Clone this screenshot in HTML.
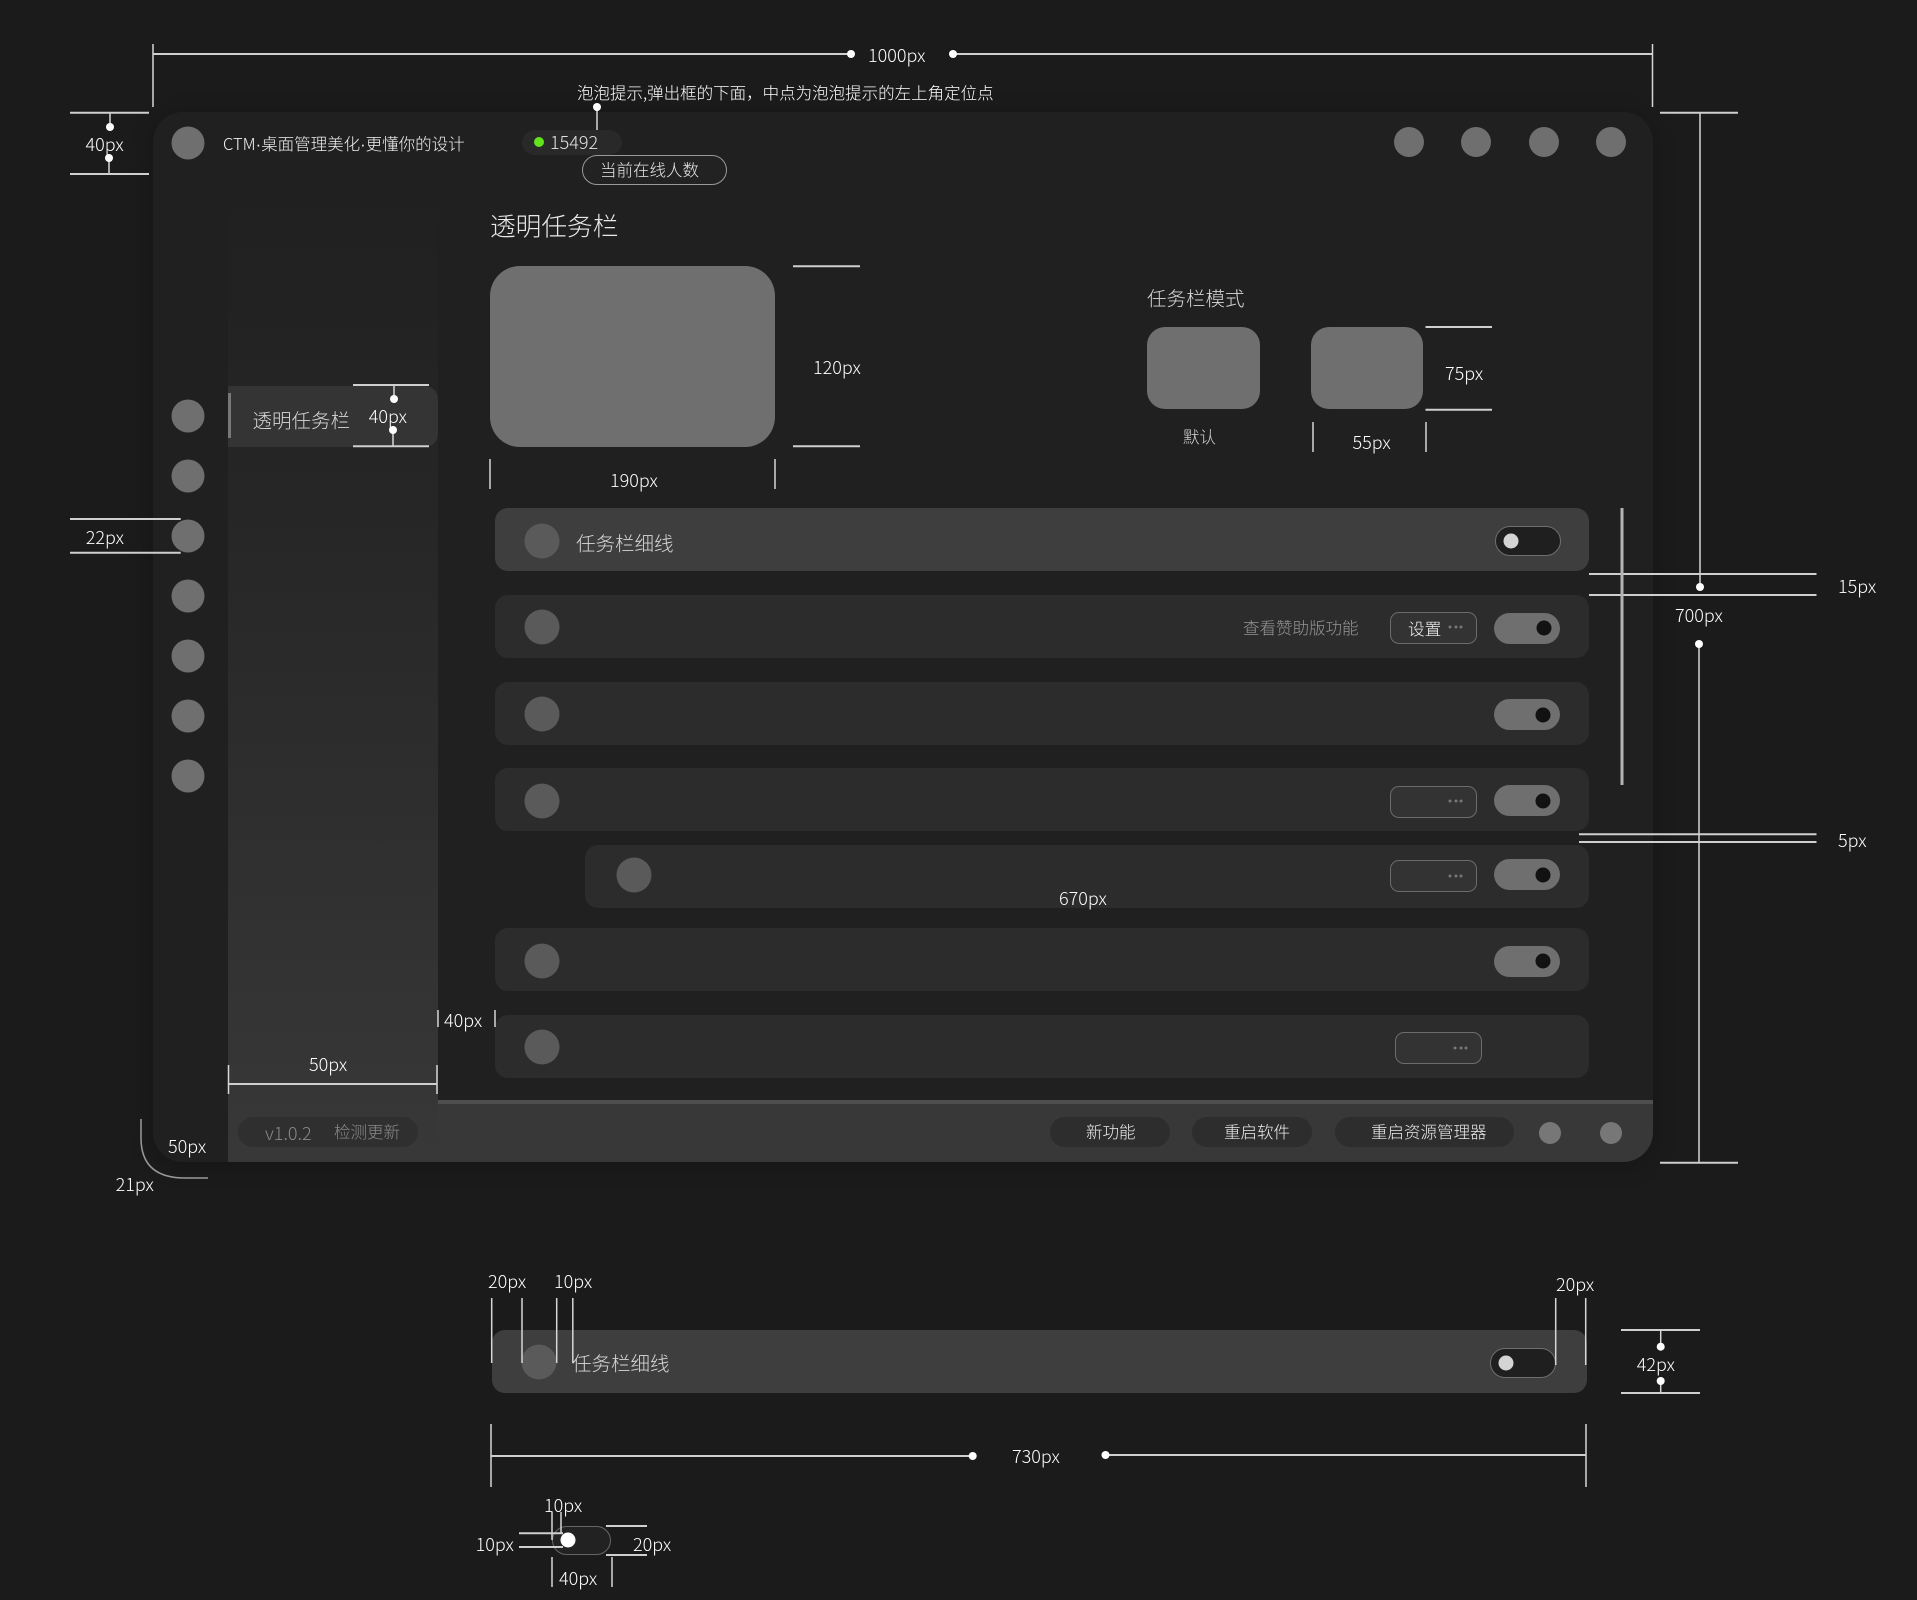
<!DOCTYPE html>
<html lang="zh-CN">
<head>
<meta charset="utf-8">
<title>CTM</title>
<style>
html,body{margin:0;padding:0;background:#1b1b1b;}
body{position:relative;width:1917px;height:1600px;overflow:hidden;font-family:"Noto Sans CJK SC","Liberation Sans",sans-serif;font-weight:300;}
div,span{position:absolute;box-sizing:border-box;}
i{font-style:normal;font-family:"Liberation Sans",sans-serif;}
#win{left:153px;top:112px;width:1500px;height:1050px;background:#202020;border-radius:30px;box-shadow:0 4px 24px rgba(0,0,0,.22);overflow:hidden;}
#side{left:228px;top:180px;width:210px;height:982px;background:linear-gradient(#202020,#262626 33%,#333 81%,#383838);}
#rail{left:153px;top:1000px;width:75px;height:162px;background:#202020;border-radius:0 0 0 30px;}
#bar{left:438px;top:1100px;width:1215px;height:62px;background:#383838;border-top:4px solid #4e4e4e;border-radius:0 0 30px 0;}
.c{border-radius:50%;transform:translate(-50%,-50%);}
.gc{width:33px;height:33px;background:#6f6f6f;}
.top{width:30px;height:30px;background:#6f6f6f;}
.rc{width:35px;height:35px;background:#5a5a5a;}
.row{height:63px;left:495px;width:1094px;background:#2c2c2c;border-radius:13px;}
.row.a{background:#3e3e3e;}
.off{width:66px;height:30px;background:#1f1f1f;border:1.5px solid #6f6f6f;border-radius:15px;}
.on{width:66px;height:31px;background:#6f6f6f;border-radius:16px;}
.kw{width:15px;height:15px;background:#d4d4d4;}
.kb{width:15px;height:15px;background:#121212;}
.btn{width:87px;height:32px;background:#333;border:1.5px solid #6c6c6c;border-radius:9px;}
.dot3{width:3px;height:3px;background:#777;}
.box{background:#6f6f6f;}
.pill{height:30px;background:#2d2d2d;border-radius:15px;}
.t{white-space:nowrap;transform:translateY(-50%);line-height:1.2;color:#eee;font-size:18px;}
.a1{color:#fff;}
.grey{color:#8a8a8a;}
#ann{left:0;top:0;}
</style>
</head>
<body>
<div id="win"></div>
<div id="side"></div>
<div id="rail"></div>
<div id="bar"></div>

<!-- header -->
<div class="c top" style="left:187.5px;top:143px;width:33px;height:33px;background:#6f6f6f"></div>
<div class="c top" style="left:1409px;top:142px"></div>
<div class="c top" style="left:1476px;top:142px"></div>
<div class="c top" style="left:1543.5px;top:142px"></div>
<div class="c top" style="left:1610.5px;top:142px"></div>
<div style="left:522px;top:130px;width:100px;height:25px;background:#292929;border-radius:13px"></div>
<div class="c" style="left:538.5px;top:142px;width:10px;height:10px;background:#62e31c"></div>
<div style="left:582px;top:155px;width:145px;height:30px;background:#222;border:1.5px solid #999;border-radius:15px"></div>

<!-- rail -->
<div class="c gc" style="left:187.5px;top:415.7px"></div>
<div class="c gc" style="left:187.5px;top:475.7px"></div>
<div class="c gc" style="left:187.5px;top:535.7px"></div>
<div class="c gc" style="left:187.5px;top:595.7px"></div>
<div class="c gc" style="left:187.5px;top:655.7px"></div>
<div class="c gc" style="left:187.5px;top:715.7px"></div>
<div class="c gc" style="left:187.5px;top:775.7px"></div>

<!-- sidebar item -->
<div style="left:228px;top:386px;width:210px;height:61px;background:#343434;border-radius:0 13px 13px 0"></div>
<div style="left:228px;top:393px;width:3px;height:45px;background:#787878"></div>

<!-- previews -->
<div class="box" style="left:490px;top:266px;width:285px;height:180.5px;border-radius:30px"></div>
<div class="box" style="left:1147px;top:327px;width:113px;height:82px;border-radius:18px"></div>
<div class="box" style="left:1311px;top:327px;width:112px;height:82px;border-radius:18px"></div>

<!-- rows -->
<div class="row a" style="top:508px"></div>
<div class="row" style="top:595px"></div>
<div class="row" style="top:682px"></div>
<div class="row" style="top:768px"></div>
<div class="row" style="top:844.5px;left:585px;width:1004px"></div>
<div class="row" style="top:928px"></div>
<div class="row" style="top:1015px"></div>

<div class="c rc" style="left:542px;top:540.5px"></div>
<div class="c rc" style="left:542px;top:627px"></div>
<div class="c rc" style="left:542px;top:714px"></div>
<div class="c rc" style="left:542px;top:800.5px"></div>
<div class="c rc" style="left:633.5px;top:875px"></div>
<div class="c rc" style="left:542px;top:961px"></div>
<div class="c rc" style="left:542px;top:1047px"></div>

<!-- toggles -->
<div class="off" style="left:1494.5px;top:526px"></div>
<div class="c kw" style="left:1511px;top:541px"></div>
<div class="on" style="left:1494px;top:613px"></div>
<div class="c kb" style="left:1544px;top:628px"></div>
<div class="on" style="left:1493.5px;top:699px"></div>
<div class="c kb" style="left:1543px;top:714.5px"></div>
<div class="on" style="left:1493.5px;top:785px"></div>
<div class="c kb" style="left:1543px;top:800.5px"></div>
<div class="on" style="left:1493.5px;top:859px"></div>
<div class="c kb" style="left:1543px;top:874.5px"></div>
<div class="on" style="left:1493.5px;top:946px"></div>
<div class="c kb" style="left:1543px;top:961px"></div>

<!-- buttons -->
<div class="btn" style="left:1390px;top:611.5px"></div>
<div class="btn" style="left:1390px;top:785.5px"></div>
<div class="btn" style="left:1390px;top:859.5px"></div>
<div class="btn" style="left:1395px;top:1032px"></div>
<div class="c dot3" style="left:1450px;top:627px"></div><div class="c dot3" style="left:1455.5px;top:627px"></div><div class="c dot3" style="left:1461px;top:627px"></div>
<div class="c dot3" style="left:1450px;top:801px"></div><div class="c dot3" style="left:1455.5px;top:801px"></div><div class="c dot3" style="left:1461px;top:801px"></div>
<div class="c dot3" style="left:1450px;top:875.5px"></div><div class="c dot3" style="left:1455.5px;top:875.5px"></div><div class="c dot3" style="left:1461px;top:875.5px"></div>
<div class="c dot3" style="left:1455px;top:1048px"></div><div class="c dot3" style="left:1460.5px;top:1048px"></div><div class="c dot3" style="left:1466px;top:1048px"></div>

<!-- bottom bar -->
<div class="pill" style="left:238px;top:1117px;width:180px;background:#2f2f2f"></div>
<div class="pill" style="left:1050px;top:1117px;width:120px"></div>
<div class="pill" style="left:1192px;top:1117px;width:120px"></div>
<div class="pill" style="left:1335px;top:1117px;width:179px"></div>
<div class="c" style="left:1549.5px;top:1133px;width:22px;height:22px;background:#777"></div>
<div class="c" style="left:1611px;top:1133px;width:22px;height:22px;background:#777"></div>

<!-- lower example -->
<div class="row a" style="left:492px;top:1330px;width:1095px"></div>
<div class="c rc" style="left:539px;top:1362px"></div>
<div class="off" style="left:1489.5px;top:1348px"></div>
<div class="c kw" style="left:1506px;top:1363px"></div>
<div style="left:552px;top:1526px;width:59px;height:29px;background:#222;border:1.5px solid #666;border-radius:15px"></div>

<svg id="ann" style="position:absolute" width="1917" height="1600" viewBox="0 0 1917 1600">
<g fill="none" stroke="#d6d6d6" stroke-width="1.5">
<path d="M153 44V107M1652.5 44V107"/>
<path d="M597 107V130"/>
<path d="M110 113V127M109 158V174"/>
<path d="M394 385V399M393 430V446"/>
<path d="M490 459V489M775 459V489"/>
<path d="M1313 422V452M1426 422V452"/>
<path d="M1700 113V587M1699 644V1162"/>
<path d="M438 1010V1027M495 1010V1027"/>
<path d="M228.5 1065V1094M437 1065V1094"/>
<path d="M491.7 1298V1363M522 1298V1363M556.7 1298V1363M572.8 1298V1363"/>
<path d="M1555.7 1298V1365M1585.7 1298V1365"/>
<path d="M1660.7 1330V1347M1660.7 1381V1393"/>
<path d="M491 1424V1487M1586 1424V1487"/>
<path d="M552 1512V1540M561 1512V1533"/>
<path d="M552 1557V1587M612 1557V1587"/>
</g>
<g fill="none" stroke="#cfcfcf" stroke-width="2">
<path d="M153 54H851M953 54H1652"/>
<path d="M70 112.7H149M70 174H149"/>
<path d="M353 385H429M353 446.3H429"/>
<path d="M793 266.3H860M793 446.3H860"/>
<path d="M1425.5 327H1492M1425.5 409.7H1492"/>
<path d="M1660 112.7H1738M1660 1162.7H1738"/>
<path d="M1589 574H1816.5M1589 595H1816.5"/>
<path d="M1579 834.3H1816.5M1579 842H1816.5"/>
<path d="M70 519H180.7M70 552.7H180.7"/>
<path d="M229 1084H437"/>
<path d="M1621 1330H1700M1621 1393H1700"/>
<path d="M491 1456H972.7M1105.5 1455H1586"/>
<path d="M519 1533.3H563M519 1547H563"/>
<path d="M606 1526H647M606 1555H647"/>
</g>
<path d="M1622 508V785" fill="none" stroke="#b4b4b4" stroke-width="3"/>
<path d="M141 1119V1138Q141 1178 185 1178H208" fill="none" stroke="#9a9a9a" stroke-width="1.5"/>
<g fill="#fff">
<circle cx="851" cy="54" r="4"/><circle cx="953" cy="54" r="4"/>
<circle cx="597" cy="107" r="4"/>
<circle cx="110" cy="127" r="4"/><circle cx="109" cy="158" r="4"/>
<circle cx="394" cy="399" r="4"/><circle cx="393" cy="430" r="4"/>
<circle cx="1700" cy="587" r="4"/><circle cx="1699" cy="644" r="4"/>
<circle cx="1660.7" cy="1346.7" r="4"/><circle cx="1660.7" cy="1381" r="4"/>
<circle cx="972.7" cy="1456" r="4"/><circle cx="1105.5" cy="1455" r="4"/>
<circle cx="568" cy="1540" r="7.5"/>
</g>
</svg>

<!-- UI text -->
<div class="t" style="left:223px;top:145px;font-size:16.5px;color:#f0f0f0">CTM<i>·</i>桌面管理美化<i>·</i>更懂你的设计</div>
<div class="t" style="left:550px;top:143px;font-size:18px;color:#e4e4e4">15492</div>
<div class="t" style="left:600px;top:170px;font-size:16.5px;color:#e8e8e8">当前在线人数</div>
<div class="t" style="left:490px;top:226px;font-size:25.7px;color:#e8e8e8">透明任务栏</div>
<div class="t" style="left:252.5px;top:419px;font-size:19.5px;color:#d8d8d8">透明任务栏</div>
<div class="t" style="left:1147px;top:297px;font-size:19.5px;color:#d8d8d8">任务栏模式</div>
<div class="t" style="left:1183px;top:436.5px;font-size:16.5px;color:#d4d4d4">默认</div>
<div class="t" style="left:576px;top:542px;font-size:19.5px;color:#d8d8d8">任务栏细线</div>
<div class="t" style="left:1243px;top:628px;font-size:16.5px;color:#969696">查看赞助版功能</div>
<div class="t" style="left:1408px;top:628px;font-size:16.7px;color:#f4f4f4">设置</div>
<div class="t grey" style="left:265px;top:1133.5px;font-size:18px">v1.0.2</div>
<div class="t grey" style="left:334px;top:1132px;font-size:16.5px">检测更新</div>
<div class="t" style="left:1086px;top:1132px;font-size:16.5px;color:#ececec">新功能</div>
<div class="t" style="left:1224px;top:1132px;font-size:16.5px;color:#ececec">重启软件</div>
<div class="t" style="left:1371px;top:1132px;font-size:16.5px;color:#ececec">重启资源管理器</div>
<div class="t" style="left:572px;top:1362px;font-size:19.5px;color:#d8d8d8">任务栏细线</div>

<!-- annotation text -->
<div class="t a1" style="left:868px;top:56px">1000px</div>
<div class="t a1" style="left:577px;top:93px;font-size:16.5px">泡泡提示,弹出框的下面，中点为泡泡提示的左上角定位点</div>
<div class="t a1" style="left:85.5px;top:145px">40px</div>
<div class="t a1" style="left:368.7px;top:417px">40px</div>
<div class="t a1" style="left:813px;top:368px">120px</div>
<div class="t a1" style="left:610px;top:481px">190px</div>
<div class="t a1" style="left:1445px;top:374px">75px</div>
<div class="t a1" style="left:1352.5px;top:443px">55px</div>
<div class="t a1" style="left:1675px;top:616px">700px</div>
<div class="t a1" style="left:1838px;top:587px">15px</div>
<div class="t a1" style="left:1838px;top:841px">5px</div>
<div class="t a1" style="left:1059px;top:898.5px">670px</div>
<div class="t a1" style="left:85.7px;top:538px">22px</div>
<div class="t a1" style="left:444px;top:1021px">40px</div>
<div class="t a1" style="left:309px;top:1065px">50px</div>
<div class="t a1" style="left:168px;top:1147px">50px</div>
<div class="t a1" style="left:115.6px;top:1185px">21px</div>
<div class="t a1" style="left:488px;top:1282px">20px</div>
<div class="t a1" style="left:554px;top:1282px">10px</div>
<div class="t a1" style="left:1556px;top:1285px">20px</div>
<div class="t a1" style="left:1636.7px;top:1364.7px">42px</div>
<div class="t a1" style="left:1012px;top:1457px">730px</div>
<div class="t a1" style="left:544px;top:1506px">10px</div>
<div class="t a1" style="left:475.6px;top:1545px">10px</div>
<div class="t a1" style="left:633px;top:1545px">20px</div>
<div class="t a1" style="left:559px;top:1579px">40px</div>
</body>
</html>
